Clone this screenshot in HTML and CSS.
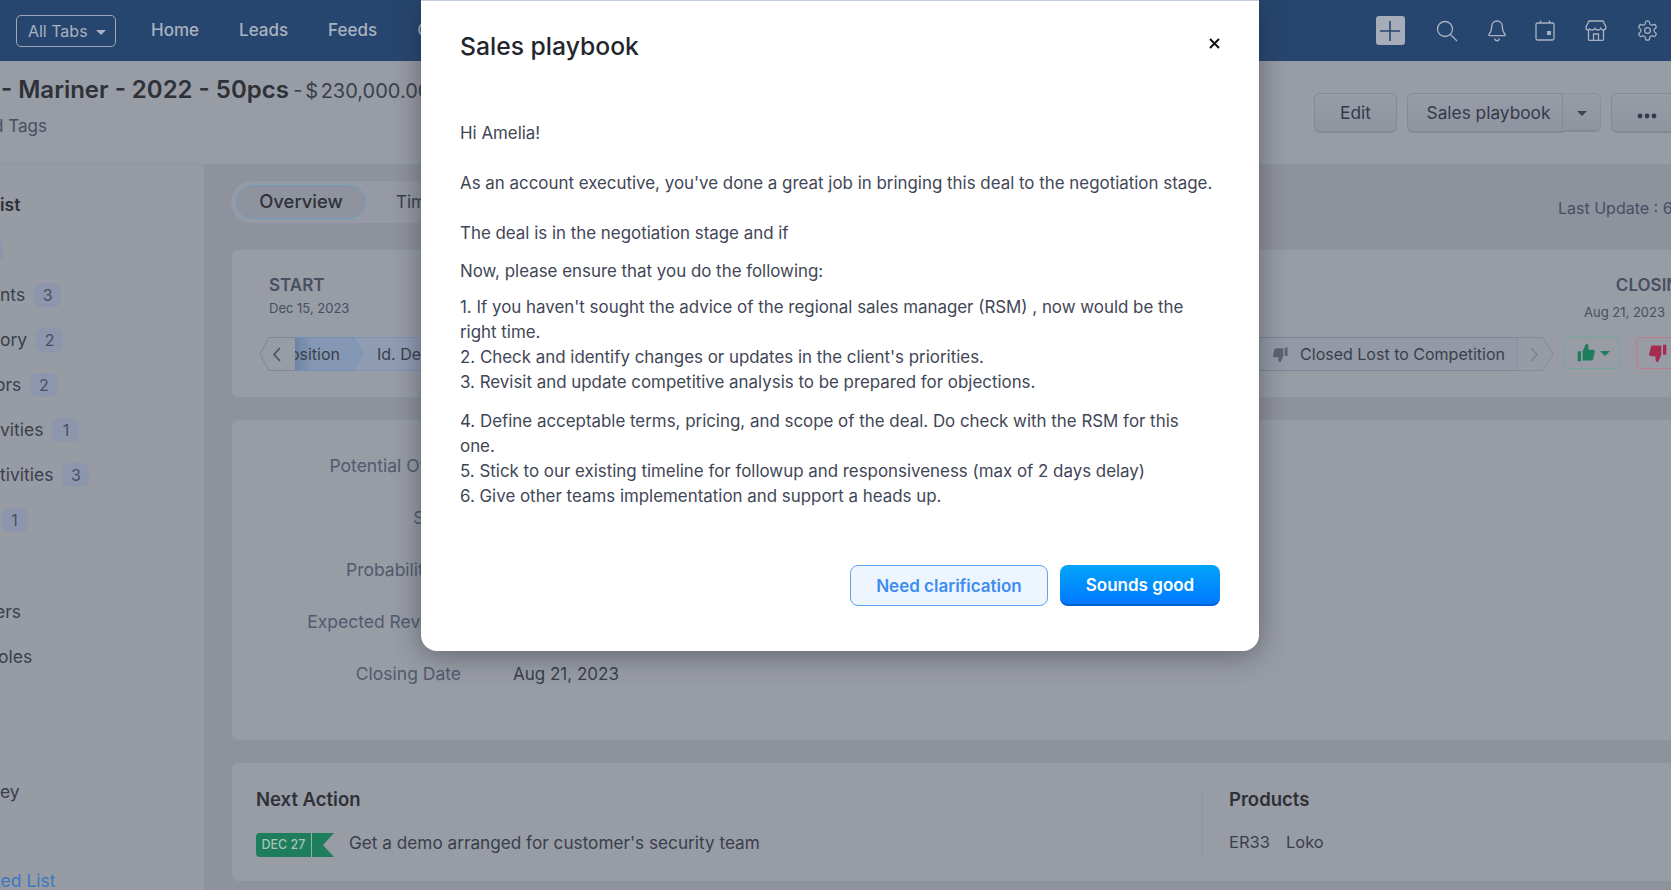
FILE: index.html
```html
<!DOCTYPE html>
<html lang="en">
<head>
  <meta charset="UTF-8">
  <meta name="viewport" content="width=device-width, initial-scale=1">
  <title>Sales playbook</title>
  <link rel="stylesheet" href="styles.css">
</head>
<body>
  <header class="topbar">
    <button class="all-tabs">All Tabs <span class="caret"></span></button>
    <nav class="nav">
      <a>Home</a>
      <a>Leads</a>
      <a>Feeds</a>
      <a>Calls</a>
    </nav>
    <div class="top-icons">
      <span class="plus-box">
        <svg width="22" height="22" viewBox="0 0 22 22"><path d="M11 1v20M1 11h20" stroke="#27466f" stroke-width="1.6"/></svg>
      </span>
      <svg class="ico" width="22" height="22" viewBox="0 0 22 22"><circle cx="9" cy="9" r="7.5"/><path d="M14.5 14.5L21 21"/></svg>
      <svg class="ico" width="18" height="22" viewBox="0 0 18 22"><path d="M9 1c-3.4 0-5.3 2.6-5.3 5.6 0 4.400-1 5.800-2.700 7.600-.5.6-.1 1.500.7 1.500h14.600c.8 0 1.200-.9.7-1.500-1.700-1.800-2.700-3.200-2.700-7.600C14.300 3.600 12.400 1 9 1z"/><path d="M6.500 18.500c.4 1.500 1.300 2.300 2.500 2.300s2.100-.8 2.500-2.300"/></svg>
      <svg class="ico" width="20" height="21" viewBox="0 0 20 21"><rect x="1" y="3" width="18" height="17" rx="1.500"/><path d="M5.500 .5V3M14.500 .5V3"/><rect x="12" y="11" width="4" height="4" fill="#a9b2bf" stroke="none"/></svg>
      <svg class="ico" width="22" height="21" viewBox="0 0 22 21"><path d="M4 1h14l3 6c0 2-1.200 3-2.700 3-1.300 0-2.300-.7-2.600-1.600-.4 1-1.400 1.600-2.800 1.600-1.300 0-2.400-.6-2.900-1.600-.5 1-1.600 1.600-2.900 1.600-1.400 0-2.400-.6-2.800-1.600C5 9.300 4 10 2.700 10 1.200 10 1 9 1 7z"/><path d="M3.500 10v9.500c0 .5.300.8.800.8h13.400c.5 0 .8-.3.800-.8V10"/><path d="M8.500 20v-6h5v6"/></svg>
      <svg class="ico" width="23" height="23" viewBox="0 0 24 24"><path d="M12.220 2h-.44a2 2 0 0 0-2 2v.18a2 2 0 0 1-1 1.730l-.43.25a2 2 0 0 1-2 0l-.15-.08a2 2 0 0 0-2.730.73l-.22.38a2 2 0 0 0 .73 2.730l.15.1a2 2 0 0 1 1 1.720v.51a2 2 0 0 1-1 1.740l-.15.09a2 2 0 0 0-.73 2.730l.22.38a2 2 0 0 0 2.730.73l.15-.08a2 2 0 0 1 2 0l.43.25a2 2 0 0 1 1 1.730V20a2 2 0 0 0 2 2h.44a2 2 0 0 0 2-2v-.18a2 2 0 0 1 1-1.730l.43-.25a2 2 0 0 1 2 0l.15.08a2 2 0 0 0 2.730-.73l.22-.39a2 2 0 0 0-.73-2.730l-.15-.08a2 2 0 0 1-1-1.740v-.5a2 2 0 0 1 1-1.740l.15-.09a2 2 0 0 0 .73-2.730l-.22-.38a2 2 0 0 0-2.730-.73l-.15.08a2 2 0 0 1-2 0l-.43-.25a2 2 0 0 1-1-1.730V4a2 2 0 0 0-2-2z"/><circle cx="12" cy="12" r="3"/></svg>
    </div>
  </header>

  <section class="subhead">
    <div class="deal-info">
      <div class="deal-title"><strong>- Mariner - 2022 - 50pcs</strong> <span class="deal-amount">- $ 230,000.00</span></div>
      <div class="deal-tags">d Tags</div>
    </div>
    <div class="deal-actions">
      <button class="btn btn-edit">Edit</button>
      <div class="split">
        <button class="btn btn-split">Sales playbook</button>
        <button class="btn btn-drop"><span class="caret caret-dark"></span></button>
      </div>
      <button class="btn btn-more">
        <svg width="20" height="6" viewBox="0 0 20 6"><circle cx="3" cy="3" r="2.400"/><circle cx="10" cy="3" r="2.400"/><circle cx="17" cy="3" r="2.400"/></svg>
      </button>
    </div>
  </section>

  <div class="content">
    <aside class="sidebar">
      <div class="side-head">ist</div>
      <div class="side-item"><span class="badge badge-cut"></span></div>
      <div class="side-item">nts <span class="badge">3</span></div>
      <div class="side-item">ory <span class="badge">2</span></div>
      <div class="side-item side-cut">ors <span class="badge">2</span></div>
      <div class="side-item">vities <span class="badge">1</span></div>
      <div class="side-item">tivities <span class="badge">3</span></div>
      <div class="side-item"><span class="badge badge-tight">1</span></div>
      <div class="side-item side-gap side-cut">ers</div>
      <div class="side-item side-cut-sm">oles</div>
      <div class="side-item side-gap-lg">ey</div>
      <div class="side-item side-link side-cut">ted List</div>
    </aside>

    <main class="main">
      <div class="tabs-row">
        <div class="tabs">
          <span class="tab tab-on">Overview</span>
          <span class="tab">Timeline</span>
        </div>
        <span class="last-update">Last Update : 6</span>
      </div>

      <section class="card card-stage">
        <div class="stage-dates">
          <div>
            <div class="stage-label">START</div>
            <div class="stage-date">Dec 15, 2023</div>
          </div>
          <div class="stage-end">
            <div class="stage-label">CLOSING</div>
            <div class="stage-date stage-date-end">Aug 21, 2023</div>
          </div>
        </div>
        <div class="stage-row">
          <div class="stage">
            <svg class="stage-prev" width="36" height="34" viewBox="0 0 36 34"><path d="M36 .5H10L1 17l9 16.500h26" fill="#989ca5" stroke="#7f8595"/><path d="M21 11l-6 6.500 6 6.500" fill="none" stroke="#474f62" stroke-width="1.600"/></svg>
            <div class="step step-current">Proposition</div>
            <svg class="step-tip" width="10" height="34" viewBox="0 0 10 34"><path d="M0 0l9.500 17L0 34z" fill="#8598b3"/><path d="M0 0l9.500 17L0 34" fill="none" stroke="#7593b8"/></svg>
            <div class="step step-next">Id. Decision Makers</div>
            <div class="step step-lost">
              <svg width="17" height="17" viewBox="0 0 24 24"><path fill="#5c6373" d="M22 14h-4V2h4zM16 14l-4 9c-1.700 0-3-1.300-3-3v-4H3.500c-1.400 0-2.400-1.300-2-2.700l2-8.800C3.800 3.500 4.600 3 5.500 3H16z"/></svg>
              <span>Closed Lost to Competition</span>
            </div>
            <svg class="stage-next" width="37" height="34" viewBox="0 0 37 34"><path d="M0 .5h26L36 17 26 33.500H0z" fill="#979ba4" stroke="#868b98"/><path d="M14 11l6 6.500-6 6.500" fill="none" stroke="#7c8290" stroke-width="1.600"/></svg>
          </div>
          <button class="thumb thumb-up">
            <svg width="20" height="20" viewBox="0 0 24 24"><path fill="#1e7d5c" d="M2 10h4v12H2zM8 10l4-9c1.700 0 3 1.300 3 3v4h5.500c1.400 0 2.400 1.300 2 2.700l-2 8.800c-.3 1-1.100 1.500-2 1.500H8z"/></svg>
            <span class="caret caret-green"></span>
          </button>
          <button class="thumb thumb-down">
            <svg width="20" height="20" viewBox="0 0 24 24"><path fill="#a32c50" d="M22 14h-4V2h4zM16 14l-4 9c-1.700 0-3-1.300-3-3v-4H3.500c-1.400 0-2.400-1.300-2-2.700l2-8.800C3.800 3.500 4.600 3 5.500 3H16z"/></svg>
          </button>
        </div>
      </section>

      <section class="card card-fields">
        <div class="field">Potential Owner</div>
        <div class="field">Stage</div>
        <div class="field">Probability&nbsp; %</div>
        <div class="field">Expected Revenue</div>
        <div class="field">Closing Date<span class="field-value">Aug 21, 2023</span></div>
      </section>

      <section class="card card-next">
        <div class="next-action">
          <h3>Next Action</h3>
          <div class="next-line">
            <span class="date-tag">DEC 27</span>
            <svg class="flag" width="22" height="24" viewBox="0 0 22 24"><path fill="#1e7d5c" d="M0 0h22l-11 12 11 12H0z"/></svg>
            <span class="next-text">Get a demo arranged for customer's security team</span>
          </div>
        </div>
        <div class="products">
          <h3>Products</h3>
          <div class="product-list"><span>ER33</span><span>Loko</span></div>
        </div>
      </section>
    </main>
  </div>

  <div class="modal">
    <div class="modal-head">
      <h2>Sales playbook</h2>
      <svg class="modal-close" width="11" height="11" viewBox="0 0 11 11"><path d="M1 1l9 9M10 1l-9 9" stroke="#111" stroke-width="2"/></svg>
    </div>
    <div class="modal-body">
      <p class="gap-big">Hi Amelia!</p>
      <p class="gap-big">As an account executive, you've done a great job in bringing this deal to the negotiation stage.</p>
      <p>The deal is in the negotiation stage and if</p>
      <p class="gap-tight">Now, please ensure that you do the following:</p>
      <p class="gap-list">1. If you haven't sought the advice of the regional sales manager (RSM) , now would be the right time.<br>
      2. Check and identify changes or updates in the client's priorities.<br>
      3. Revisit and update competitive analysis to be prepared for objections.</p>
      <p>4. Define acceptable terms, pricing, and scope of the deal. Do check with the RSM for this one.<br>
      5. Stick to our existing timeline for followup and responsiveness (max of 2 days delay)<br>
      6. Give other teams implementation and support a heads up.</p>
    </div>
    <div class="modal-foot">
      <button class="btn-light">Need clarification</button>
      <button class="btn-blue">Sounds good</button>
    </div>
  </div>
</body>
</html>
```

FILE: styles.css
```css
* {
  box-sizing: border-box;
}
html, body {
  height: 100%;
}
body {
  margin: 0;
  height: 890px;
  overflow: hidden;
  position: relative;
  font-family: Inter, "Noto Sans", sans-serif;
  font-size: 16px;
  color: #2e3138;
  background-color: #8e929d;
  display: flex;
  flex-direction: column;
}
button {
  font-family: inherit;
  cursor: pointer;
}

/* top bar */
.topbar {
  height: 61px;
  flex: none;
  background-color: #27466f;
  display: flex;
  align-items: center;
  padding-left: 16px;
  color: #a9b2bf;
}
.all-tabs {
  width: 100px;
  height: 32px;
  border: 1px solid #9fa8b6;
  border-radius: 5px;
  background: none;
  color: #a9b2bf;
  font-size: 16px;
  padding: 0 0 0 2px;
}
.caret {
  display: inline-block;
  margin-left: 4px;
  vertical-align: middle;
  border-left: 5px solid transparent;
  border-right: 5px solid transparent;
  border-top: 5px solid #a9b2bf;
}
.caret-dark {
  border-top-color: #3c4352;
  margin: 0;
}
.caret-green {
  border-top-color: #1e7d5c;
  margin: 0;
}
.nav {
  display: flex;
  gap: 40px;
  margin: -1px 0 0 35px;
  font-size: 17px;
  font-weight: 500;
}
.top-icons {
  margin-left: auto;
  display: flex;
  align-items: center;
  gap: 29.500px;
  padding-right: 12px;
}
.plus-box {
  width: 29px;
  height: 29px;
  margin-right: 2px;
  background-color: #a7adb8;
  border-radius: 3px;
  display: flex;
  align-items: center;
  justify-content: center;
}
.ico {
  fill: none;
  stroke: #a9b2bf;
  stroke-width: 1.300;
}

/* deal header */
.subhead {
  height: 104px;
  flex: none;
  background-color: #989ca5;
  border-bottom: 1px solid #8d97aa;
  display: flex;
  justify-content: space-between;
  white-space: nowrap;
}
.deal-info {
  padding: 14px 0 0 1px;
}
.deal-title strong {
  font-size: 24px;
  font-weight: 600;
  color: #2e3138;
}
.deal-amount {
  font-size: 20px;
  word-spacing: -3px;
  color: #3a3f4c;
}
.deal-tags {
  margin: 12px 0 0 -8px;
  font-size: 17px;
  color: #474f62;
}
.deal-actions {
  display: flex;
  gap: 10px;
  padding-top: 32px;
  margin-right: -12px;
}
.btn {
  height: 40px;
  background: linear-gradient(#989ca5, #8f94a0);
  border: 1px solid #858a97;
  border-bottom-width: 2px;
  border-radius: 6px;
  color: #333a4a;
  font-size: 17.300px;
  padding: 0;
}
.btn-edit {
  width: 83px;
}
.split {
  display: flex;
}
.btn-split {
  width: 156px;
  padding-left: 7px;
  border-radius: 6px 0 0 6px;
}
.btn-drop {
  width: 38px;
  height: 39px;
  padding: 0;
  border-left-color: #747a88;
  border-right-color: #8b909c;
  border-top-color: #8b909c;
  border-radius: 0 6px 6px 0;
  border-left-width: 0;
}
.btn-more {
  width: 72px;
  fill: #333a4a;
}

/* layout */
.content {
  flex: 1;
  display: flex;
  min-height: 0;
}
.sidebar {
  width: 204px;
  flex: none;
  background-color: #979ba4;
  padding-top: 17px;
  white-space: nowrap;
  color: #3a3f4c;
  font-size: 17.500px;
}
.side-head {
  height: 45px;
  line-height: 45px;
  font-weight: 600;
  color: #2e3138;
  font-size: 17.500px;
}
.side-item {
  height: 45px;
  display: flex;
  align-items: center;
  gap: 9px;
}
.side-cut {
  margin-left: -5px;
}
.side-cut-sm {
  margin-left: -2px;
}
.side-gap {
  margin-top: 47px;
}
.side-gap-lg {
  margin-top: 90px;
}
.side-link {
  margin-top: 44px;
  color: #3c78c0;
}
.badge {
  width: 27px;
  height: 24px;
  background-color: #8d96ad;
  border-radius: 7px;
  color: #474f62;
  font-size: 16px;
  display: flex;
  align-items: center;
  justify-content: center;
}
.badge-cut {
  margin-left: -24px;
}
.badge-tight {
  margin-left: 1px;
}

.main {
  width: 1540px;
  flex: none;
  padding: 16px 0 0 27px;
}
.tabs-row {
  display: flex;
  align-items: center;
  height: 42px;
  margin-bottom: 26px;
  white-space: nowrap;
}
.tabs {
  width: 500px;
  height: 42px;
  background-color: #969aa4;
  border-radius: 21px;
  padding: 3px 5px;
  display: flex;
  align-items: center;
}
.tab {
  padding: 0 30px;
  color: #3a3f4c;
  font-size: 17px;
}
.tab-on {
  width: 130px;
  height: 34px;
  padding: 0 0 2px;
  border: 1px solid #6e9cc0;
  border-radius: 17px;
  background-color: #8f939e;
  font-size: 18.400px;
  font-weight: 500;
  color: #2e3138;
  display: flex;
  align-items: center;
  justify-content: center;
}
.last-update {
  margin-left: 827px;
  margin-top: 12px;
  font-size: 16px;
  color: #474f62;
}
.card {
  background-color: #989ca5;
  border: 1px solid #8d94a2;
  border-radius: 8px;
  margin-bottom: 21px;
}
.card-stage {
  height: 149px;
  padding: 25px 51px 0 27px;
}
.stage-dates {
  display: flex;
  justify-content: space-between;
  padding-left: 10px;
}
.stage-label {
  font-size: 17px;
  font-weight: 600;
  color: #474f62;
}
.stage-date {
  margin-top: 5px;
  font-size: 13px;
  color: #474f62;
}
.stage-end {
  text-align: right;
}
.stage-date-end {
  margin: 9px 27px 0 0;
}
.stage-row {
  display: flex;
  align-items: flex-start;
  margin-top: 17px;
  gap: 10px;
}
.stage {
  flex: 1;
  display: flex;
  height: 34px;
  min-width: 0;
}
.stage-prev {
  position: relative;
  z-index: 1;
  flex: none;
}
.step {
  height: 34px;
  display: flex;
  align-items: center;
  font-size: 16px;
  color: #3a3f4c;
  border-top: 1px solid #7f8595;
  border-bottom: 1px solid #7f8595;
  white-space: nowrap;
}
.step-current {
  width: 58px;
  flex: none;
  justify-content: flex-end;
  padding-right: 13px;
  overflow: hidden;
  background: linear-gradient(90deg, #6d84a4, #8598b3 30%);
  border-color: #7593b8;
}
.step-tip {
  position: relative;
  z-index: 1;
  flex: none;
  margin-right: -10px;
}
.step-next {
  width: 400px;
  padding-left: 24px;
  margin-right: auto;
  background-color: #8f9cb3;
  border-color: #7f94b3;
}
.step-lost {
  width: 320px;
  justify-content: flex-end;
  gap: 11px;
  padding-right: 12px;
  background-color: #939aa6;
}
.stage-next {
  flex: none;
}
.thumb {
  width: 56px;
  height: 32px;
  flex: none;
  border-radius: 5px;
  background: none;
  display: flex;
  align-items: center;
  gap: 4px;
  padding: 0 0 0 11px;
}
.thumb-up {
  border: 1px solid #6fa896;
  margin-right: 6px;
}
.thumb-down {
  border: 1px solid #bd7d8f;
}
.card-fields {
  height: 322px;
  padding-top: 20px;
}
.field {
  height: 52px;
  line-height: 52px;
  width: 229px;
  text-align: right;
  white-space: nowrap;
  font-size: 17.500px;
  color: #525a6d;
}
.field-value {
  position: absolute;
  left: 513px;
  font-size: 17px;
  color: #3a3f4c;
}
.card-next {
  height: 120px;
  display: flex;
  padding: 25px 0 0 24px;
}
.card-next h3 {
  margin: 0;
  font-size: 18.500px;
  font-weight: 600;
  color: #2e3138;
}
.next-action {
  width: 946px;
}
.next-line {
  display: flex;
  align-items: center;
  margin-top: 22px;
}
.date-tag {
  width: 56px;
  height: 24px;
  background-color: #1e7d5c;
  border-radius: 4px 0 0 4px;
  border-right: 1px solid #8fb5a6;
  color: #a9c2b8;
  font-size: 12.500px;
  font-weight: 500;
  display: flex;
  align-items: center;
  justify-content: center;
}
.next-text {
  margin: 0 0 4px 15px;
  font-size: 17.200px;
  color: #3a3f4c;
}
.products {
  border-left: 1px solid #8d94a2;
  height: 70px;
  margin-top: 0;
  padding: 0 0 0 26px;
}
.product-list {
  display: flex;
  gap: 16px;
  margin-top: 22px;
  font-size: 16.500px;
  color: #3a3f4c;
}

/* modal */
.modal {
  position: absolute;
  left: 421px;
  top: 0;
  width: 838px;
  height: 651px;
  background-color: #fff;
  border-top: 1px solid #c3cddb;
  border-radius: 0 0 16px 16px;
  box-shadow: 0 4px 28px rgba(30, 33, 45, 0.45);
  padding: 0 39px;
  display: flex;
  flex-direction: column;
}
.modal-head {
  height: 120px;
  padding-top: 29px;
  display: flex;
  justify-content: space-between;
  flex: none;
}
.modal-head h2 {
  margin: 0;
  font-size: 24.700px;
  line-height: 32px;
  font-weight: 500;
  color: #23262c;
}
.modal-close {
  margin: 8px 0 0 0;
}
.modal-body {
  width: 755px;
  color: #3f4656;
  font-size: 16.900px;
  line-height: 25px;
}
.modal-body p {
  margin: 0 0 13px;
}
.modal-body .gap-big {
  margin-bottom: 25px;
}
.modal-body .gap-tight {
  margin-bottom: 11px;
}
.modal-body .gap-list {
  margin-bottom: 14px;
}
.modal-foot {
  margin-top: auto;
  padding-bottom: 45px;
  display: flex;
  justify-content: flex-end;
  gap: 12px;
  align-items: flex-start;
}
.btn-light {
  width: 198px;
  height: 41px;
  background-color: #edf5fe;
  border: 1px solid #5fa2ee;
  border-radius: 8px;
  color: #3f8df0;
  font-size: 17px;
  font-weight: 600;
  padding: 0;
}
.btn-blue {
  width: 160px;
  height: 41px;
  background: linear-gradient(#02a5f8, #0078ff);
  border: none;
  border-bottom: 2px solid #0060d8;
  border-radius: 8px;
  color: #fff;
  font-size: 17px;
  font-weight: 600;
  padding: 0;
}
```
